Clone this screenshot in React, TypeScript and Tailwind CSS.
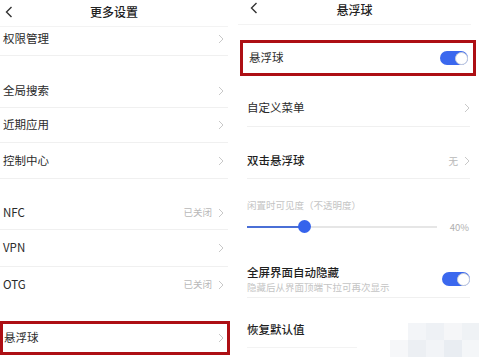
import React from 'react';

const font = { fontFamily: '"Noto Sans CJK SC", "Noto Sans", sans-serif' };

const Chevron: React.FC<{ className?: string }> = ({ className = '' }) => (
  <svg width="6" height="10" viewBox="0 0 6 10" className={className}>
    <polyline points="1,1 5,5 1,9" fill="none" stroke="#c8c8c8" strokeWidth="1" />
  </svg>
);

const Back: React.FC = () => (
  <svg width="8" height="12" viewBox="0 0 8 12">
    <polyline points="6.5,1 1.5,6 6.5,11" fill="none" stroke="#333" strokeWidth="1.4" />
  </svg>
);

const Toggle: React.FC = () => (
  <div className="w-[28px] h-[14px] rounded-full bg-[#3b68ee] flex items-center justify-end">
    <div className="w-[13px] h-[13px] rounded-full bg-white border border-[#c9cfdb]" />
  </div>
);

interface RowProps {
  label: string;
  value?: string;
  h: string;
  line?: boolean;
}

const LeftRow: React.FC<RowProps> = ({ label, value, h, line = true }) => (
  <div className={`${h} flex items-center justify-between pl-[3px] pr-[4px] ${line ? 'border-b border-[#f0f0f0]' : ''}`}>
    <span className="text-[11.5px] text-[#2a2a2a]">{label}</span>
    <div className="flex items-center gap-[6px]">
      {value && <span className="text-[9.5px] text-[#b8b8b8]">{value}</span>}
      <Chevron />
    </div>
  </div>
);

// blurred watermark squares in the corner of the source shot
const blur = [
  ['#ffffff', '#f3f5f8', '#eef1f5', '#f5f6f8', '#eff2f5'],
  ['#f6f7f9', '#eceff3', '#f2f4f7', '#e9edf2', '#f4f6f8'],
];

export default function App() {
  return (
    <div className="relative w-[479px] h-[357px] bg-white flex overflow-hidden" style={font}>
      {/* left: 更多设置 */}
      <div className="w-[238px] flex flex-col">
        <div className="h-[27px] relative flex items-center justify-center border-b border-[#f3f3f3] mr-[10px]">
          <div className="absolute left-[5px] top-[6px]"><Back /></div>
          <span className="text-[12px] font-medium text-[#222] pb-[2px]">更多设置</span>
        </div>
        <div className="mr-[10px]">
          <div className="h-[29px] flex items-center justify-between pl-[3px] pr-[4px] pb-[5px] border-b border-[#f0f0f0]">
            <span className="text-[11.5px] text-[#2a2a2a]">权限管理</span>
            <Chevron />
          </div>
          <div className="h-[18px]" />
          <LeftRow label="全局搜索" h="h-[34px]" />
          <LeftRow label="近期应用" h="h-[35px]" />
          <LeftRow label="控制中心" h="h-[36px]" />
          <div className="h-[17px]" />
          <LeftRow label="NFC" value="已关闭" h="h-[34px]" />
          <LeftRow label="VPN" h="h-[37px]" />
          <LeftRow label="OTG" value="已关闭" h="h-[35px]" line={false} />
          <div className="h-[19px]" />
        </div>
        <div className="w-[230px] h-[34px] border-[3px] border-[#ad0f14] flex items-center justify-between pl-[1px] pr-[3px]">
          <span className="text-[11.5px] text-[#2a2a2a]">悬浮球</span>
          <Chevron />
        </div>
      </div>

      {/* right: 悬浮球 */}
      <div className="flex-1 flex flex-col">
        <div className="h-[25px] relative flex items-center justify-center border-b border-[#f3f3f3] mr-[8px]">
          <div className="absolute left-[12px] top-[2px]"><Back /></div>
          <span className="text-[12px] font-medium text-[#222] pb-[4px]">悬浮球</span>
        </div>
        <div className="h-[15px]" />
        <div className="ml-[2px] mr-[3px] h-[36px] border-[3px] border-[#ad0f14] flex items-center justify-between pl-[6px] pr-[5px]">
          <span className="text-[11.5px] text-[#2a2a2a]">悬浮球</span>
          <Toggle />
        </div>
        <div className="ml-[9px] mr-[9px]">
          <div className="h-[14px]" />
          <div className="h-[37px] flex items-center justify-between border-b border-[#f0f0f0]">
            <span className="text-[11.5px] text-[#2a2a2a]">自定义菜单</span>
            <Chevron />
          </div>
          <div className="h-[17px]" />
          <div className="h-[35px] flex items-center justify-between border-b border-[#f0f0f0]">
            <span className="text-[11.5px] text-[#1f1f1f] font-medium">双击悬浮球</span>
            <div className="flex items-center gap-[6px]">
              <span className="text-[9.5px] text-[#b8b8b8]">无</span>
              <Chevron />
            </div>
          </div>
          <div className="pt-[20px]">
            <span className="text-[9.5px] text-[#c4c4c4] leading-[12px] block">闲置时可见度（不透明度）</span>
          </div>
          <div className="h-[23px] flex items-center pt-[9px]">
            <div className="w-[190px] h-[2px] bg-[#e6e6e6] relative">
              <div className="absolute left-0 top-0 h-[2px] w-[57px] bg-[#4a6fd6]" />
              <div className="absolute left-[51px] top-[-6px] w-[13px] h-[13px] rounded-full bg-[#3563ec]" />
            </div>
            <span className="ml-auto mr-[1px] text-[9.5px] text-[#b0b0b0]">40%</span>
          </div>
          <div className="h-[30px]" />
          <div className="h-[34px] flex items-center justify-between border-b border-[#f0f0f0] pb-[3px]">
            <div className="flex flex-col">
              <span className="text-[11.5px] text-[#1f1f1f] font-medium leading-[16px]">全屏界面自动隐藏</span>
              <span className="text-[9.5px] text-[#c4c4c4] leading-[14px]">隐藏后从界面顶端下拉可再次显示</span>
            </div>
            <Toggle />
          </div>
          <div className="h-[14px]" />
          <div className="h-[36px] flex items-center border-b border-[#f3f3f3] w-[110px]">
            <span className="text-[11.5px] text-[#1f1f1f] font-medium">恢复默认值</span>
          </div>
        </div>
      </div>

      <div className="absolute left-[390px] top-[323px] flex flex-col">
        {blur.map((row, i) => (
          <div key={i} className="flex">
            {row.map((c, j) => (
              <div key={j} className="w-[18px] h-[17px]" style={{ backgroundColor: c }} />
            ))}
          </div>
        ))}
      </div>
    </div>
  );
}
